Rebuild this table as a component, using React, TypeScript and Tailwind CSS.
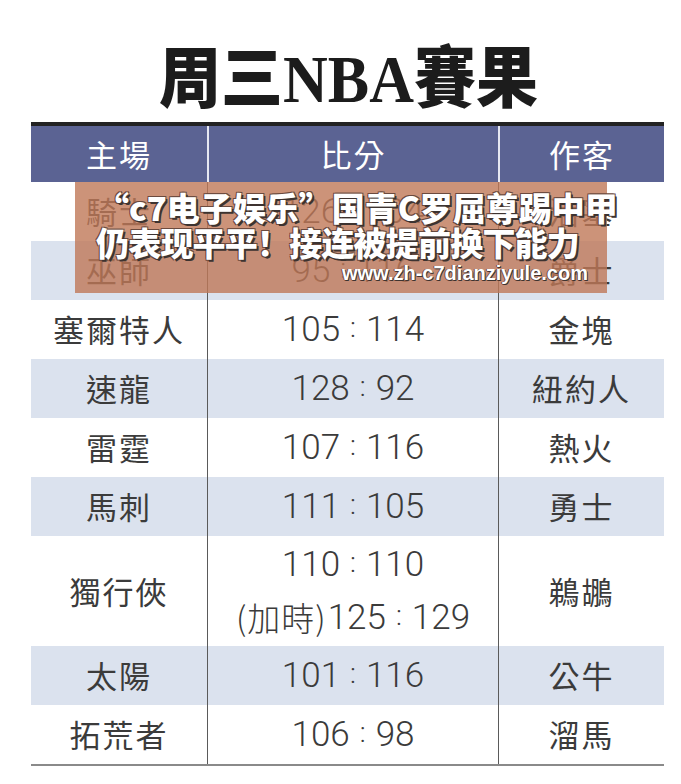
import React from 'react';

interface GameRow {
  home: string;
  away: string;
  scores: Array<[string, string, string?]>;
  tall?: boolean;
}

const games: GameRow[] = [
  { home: '騎士', away: '活塞', scores: [['126', '104']] },
  { home: '巫師', away: '爵士', scores: [['95', '116']] },
  { home: '塞爾特人', away: '金塊', scores: [['105', '114']] },
  { home: '速龍', away: '紐約人', scores: [['128', '92']] },
  { home: '雷霆', away: '熱火', scores: [['107', '116']] },
  { home: '馬刺', away: '勇士', scores: [['111', '105']] },
  { home: '獨行俠', away: '鵜鶘', scores: [['110', '110'], ['125', '129', '(加時)']], tall: true },
  { home: '太陽', away: '公牛', scores: [['101', '116']] },
  { home: '拓荒者', away: '溜馬', scores: [['106', '98']] },
];

const Score = ({ a, b, prefix }: { a: string; b: string; prefix?: string }) => (
  <div className="flex items-center justify-center leading-none">
    {prefix && (
      <span className="mr-[1px] text-[33px] tracking-[1px] font-['Noto_Sans_CJK_TC',sans-serif] font-light">{prefix}</span>
    )}
    <span>{a}</span>
    <span className="mx-[10px] text-[28px] relative -top-[2px]">:</span>
    <span>{b}</span>
  </div>
);

export default function App() {
  return (
    <div className="relative w-[681px] h-[784px] bg-white overflow-hidden">
      <div className="pl-[31px]">
        {/* Title */}
        <div className="w-[633px] h-[122px] pt-[46px] pl-[2px] text-center text-[62px] leading-none font-black text-[#1c1c1c] font-['Liberation_Serif','Noto_Sans_CJK_TC',serif]">
          <span className="inline-block scale-y-[1.08] origin-top">周三NBA賽果</span>
        </div>

        {/* Table */}
        <div className="w-[633px] border-t-4 border-[#222] border-b-2 border-b-[#8a8a8a] font-['Noto_Sans_CJK_TC',sans-serif]">
          <div className="grid grid-cols-[176px_291px_166px] h-[56px] bg-[#5b6393] text-white text-[31px]">
            <div className="flex items-center justify-center tracking-[2px]">主場</div>
            <div className="flex items-center justify-center border-l-2 border-[#e6e8f2] tracking-[2px]">比分</div>
            <div className="flex items-center justify-center border-l-2 border-[#e6e8f2] tracking-[2px]">作客</div>
          </div>

          {games.map((g, i) => (
            <div
              key={i}
              className={`grid grid-cols-[176px_291px_166px] text-[#3b3b3b] ${g.tall ? 'h-[110px]' : 'h-[59px]'} ${i % 2 === 1 ? 'bg-[#dbe2ee]' : 'bg-white'}`}
            >
              <div className="flex items-center justify-center text-[31px] tracking-[2px]">{g.home}</div>
              <div className="flex flex-col items-center justify-center gap-[18px] border-l border-[#5a5a5a] text-[35px] font-['Roboto','Noto_Sans_CJK_TC',sans-serif] font-light">
                {g.scores.map(([a, b, p], j) => (
                  <Score key={j} a={a} b={b} prefix={p} />
                ))}
              </div>
              <div className="flex items-center justify-center border-l border-[#5a5a5a] text-[31px] tracking-[2px]">{g.away}</div>
            </div>
          ))}
        </div>
      </div>

      {/* Watermark banner */}
      <div className="absolute left-[75px] top-[182px] w-[532px] h-[111px] bg-[#bf7858]/80" />
      <div className="absolute left-[96px] top-[190px] whitespace-nowrap text-white font-black font-['Noto_Sans_CJK_SC',sans-serif] [text-shadow:2px_2px_0_#3d3330,-1px_-1px_0_#6b4a3e,1px_-1px_0_#6b4a3e,-1px_1px_0_#6b4a3e]">
        <div className="text-[33px] leading-[35px] tracking-[0px]">“c7电子娱乐”国青C罗屈尊踢中甲</div>
        <div className="text-[33px] leading-[34px] tracking-[-0.8px]">仍表现平平！接连被提前换下能力</div>
      </div>
      <div className="absolute left-[342px] top-[263px] whitespace-nowrap text-white text-[20px] leading-none font-bold font-['Liberation_Sans',sans-serif] [text-shadow:1px_1px_0_#3d3330,-1px_0_0_#6b4a3e,0_1px_0_#6b4a3e]">
        www.zh-c7dianziyule.com
      </div>
    </div>
  );
}
